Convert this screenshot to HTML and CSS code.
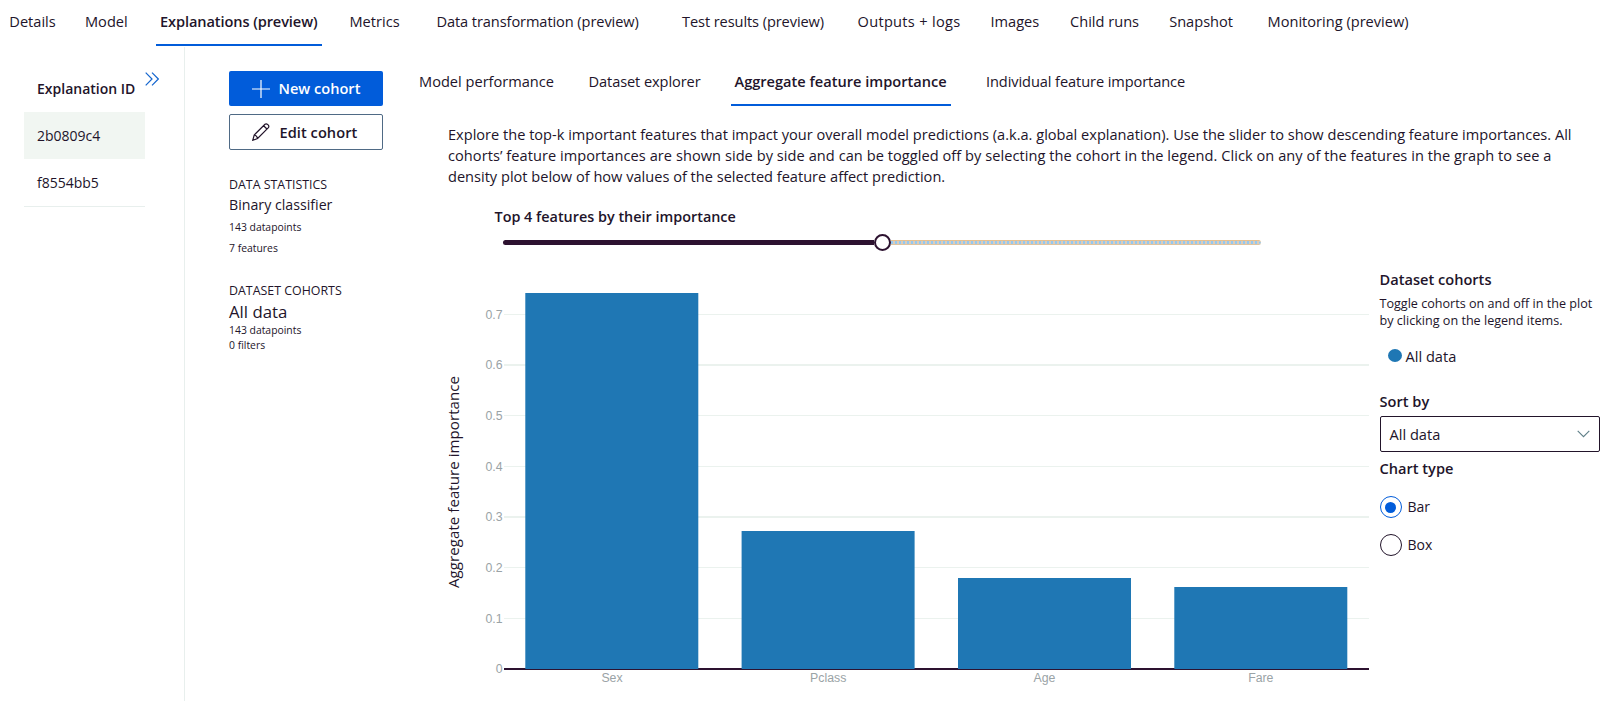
FILE: index.html
```html
<!DOCTYPE html>
<html lang="en">
<head>
<meta charset="utf-8">
<title>Explanations (preview)</title>
<link rel="stylesheet" href="styles.css">
</head>
<body>
<nav class="run-tabs">
  <a>Details</a><a>Model</a><a class="active">Explanations (preview)</a><a>Metrics</a><a class="snug">Data transformation (preview)</a><a class="snug">Test results (preview)</a><a class="wide">Outputs + logs</a><a>Images</a><a>Child runs</a><a>Snapshot</a><a>Monitoring (preview)</a>
</nav>
<div class="body">
  <aside class="explanations">
    <div class="explanations-head">
      <span>Explanation ID</span>
      <svg class="expand" width="14" height="14" viewBox="0 0 14 14"><path d="M.7.7 7 7 .7 13.3M7 .7 13.3 7 7 13.3"/></svg>
    </div>
    <div class="explanation selected">2b0809c4</div>
    <div class="explanation">f8554bb5</div>
  </aside>
  <section class="cohorts">
    <button class="btn primary">
      <svg width="18" height="18" viewBox="0 0 18 18"><path d="M9 0v18M0 9h18"/></svg>
      <span>New cohort</span>
    </button>
    <button class="btn outline">
      <svg width="18" height="18" viewBox="0 0 18 18"><path d="M.8 17.2 2.2 12 13 1.3c1.6-1.5 4.9 1.4 3.4 3.3L5.6 15.5ZM11.6 2.7l3.6 3.5M2.2 12c1.8.3 3 1.6 3.4 3.5"/></svg>
      <span>Edit cohort</span>
    </button>
    <h2 class="label">DATA STATISTICS</h2>
    <div class="model-kind">Binary classifier</div>
    <div class="stat first">143 datapoints</div>
    <div class="stat">7 features</div>
    <h2 class="label second">DATASET COHORTS</h2>
    <div class="cohort-name">All data</div>
    <div class="cohort-stat">143 datapoints</div>
    <div class="cohort-stat">0 filters</div>
  </section>
  <main class="main">
    <nav class="view-tabs">
      <a>Model performance</a><a class="snug">Dataset explorer</a><a class="active">Aggregate feature importance</a><a class="snug">Individual feature importance</a>
    </nav>
    <p class="intro">Explore the top-k important features that impact your overall model predictions (a.k.a. global explanation). Use the slider to show descending feature importances. All<br><span class="loose">cohorts’ feature importances are shown side by side and can be toggled off by selecting the cohort in the legend. Click on any of the features in the graph to see a</span><br>density plot below of how values of the selected feature affect prediction.</p>
    <div class="slider-title">Top 4 features by their importance</div>
    <div class="slider"><i class="filled"></i><i class="thumb"></i><i class="rest"></i></div>
    <div class="plot-row">
      <svg class="plot" width="931" height="441" viewBox="438 260 931 441">
        <g class="grid">
          <path d="M504 314.5h865M504 415.5h865M504 466.5h865M504 567.5h865M504 618.5h865"/>
          <path class="soft" d="M504 365h865M504 517h865"/>
        </g>
        <path class="axis" d="M504 669h865"/>
        <g class="bars">
          <rect x="525.3" y="293" width="173" height="376"/>
          <rect x="741.6" y="531" width="173" height="138"/>
          <rect x="958" y="578" width="173" height="91"/>
          <rect x="1174.3" y="587" width="173" height="82"/>
        </g>
        <g class="ticks end">
          <text x="502.5" y="318.8">0.7</text><text x="502.5" y="369.3">0.6</text><text x="502.5" y="420">0.5</text><text x="502.5" y="470.8">0.4</text><text x="502.5" y="521.3">0.3</text><text x="502.5" y="572">0.2</text><text x="502.5" y="622.8">0.1</text><text x="502.5" y="673.3">0</text>
        </g>
        <g class="ticks middle">
          <text x="612" y="682">Sex</text><text x="828.2" y="682">Pclass</text><text x="1044.5" y="682">Age</text><text x="1260.8" y="682">Fare</text>
        </g>
        <text class="axis-title" transform="translate(459.3 482) rotate(-90)" textLength="212">Aggregate feature importance</text>
      </svg>
      <div class="options">
        <h3>Dataset cohorts</h3>
        <p class="hint">Toggle cohorts on and off in the plot<br>by clicking on the legend items.</p>
        <div class="legend"><i></i>All data</div>
        <h3>Sort by</h3>
        <div class="select">All data<svg width="13" height="8" viewBox="0 0 13 8"><path d="M.7.8 6.5 6.6 12.3.8"/></svg></div>
        <h3 class="type">Chart type</h3>
        <div class="radio on"><i></i>Bar</div>
        <div class="radio"><i></i>Box</div>
      </div>
    </div>
  </main>
</div>
</body>
</html>
```
FILE: styles.css
```css
* { box-sizing: border-box; }
body {
  margin: 0;
  height: 701px;
  overflow: hidden;
  background: #fff;
  color: #22142a;
  font: 14.6px/20px "Open Sans", "Noto Sans", sans-serif;
}
h2, h3, p { margin: 0; font-size: inherit; }
h3 { font-weight: 600; }
svg { flex: none; fill: none; }

.run-tabs {
  display: grid;
  grid-template-columns: 75.7px 75px 189.5px 87px 245.5px 175.5px 133px 79.5px 99.2px 98.4px auto;
  height: 46px;
  padding: 11px 0 0 9.3px;
  white-space: nowrap;
}
.run-tabs a { height: 35px; justify-self: start; }
.run-tabs .wide { letter-spacing: .3px; }
.run-tabs .active, .view-tabs .active {
  font-weight: 600;
  border-bottom: 2px solid #015cda;
}
.run-tabs .active { width: 166px; margin-left: -4px; padding-left: 4px; letter-spacing: -.1px; }
.run-tabs .snug, .view-tabs .snug { letter-spacing: -.09px; }

.body { display: flex; height: 655px; }
.explanations {
  width: 185px;
  margin-top: 1px;
  padding-left: 24px;
  border-right: 1px solid #e8efed;
}
.explanations-head {
  display: flex;
  height: 65px;
  padding: 31.5px 0 0 13px;
  font-size: 14px;
  font-weight: 600;
}
.expand { margin: -6.5px 0 0 10px; stroke: #1566cf; stroke-width: 1.2; }
.explanation {
  width: 121px;
  height: 47px;
  padding-left: 13px;
  line-height: 47px;
  font-size: 14px;
}
.explanation.selected { background: #f1f6f2; }
.explanation:last-child { height: 48px; border-bottom: 1px solid #e8efed; }

.cohorts { width: 234px; padding: 25px 0 0 44px; }
.btn {
  display: flex;
  align-items: center;
  width: 154px;
  height: 35px;
  padding: 0 0 0 23px;
  border: 0;
  border-radius: 2px;
  font: 600 14.6px/20px "Open Sans", sans-serif;
  color: #22142a;
}
.btn svg { stroke: currentColor; stroke-width: 1.2; }
.primary { background: #015cda; color: #fff; }
.primary span { margin: -1px 0 0 8.5px; }
.outline {
  height: 36px;
  margin-top: 8px;
  padding-left: 22px;
  background: #fff;
  border: 1px solid #4f6a85;
}
.outline span { margin-left: 9.5px; letter-spacing: .05px; }
.label { margin-top: 26.5px; font-size: 12.4px; line-height: 16px; font-weight: 400; }
.model-kind { line-height: 23px; font-size: 14.2px; }
.stat { font-size: 10.4px; line-height: 21px; }
.stat.first { margin-top: 1px; }
.label.second { margin-top: 24.5px; }
.cohort-name { margin-top: .5px; font-size: 16.8px; line-height: 24px; }
.cohort-stat { font-size: 10.4px; line-height: 15px; }
.cohort-name + .cohort-stat { margin-top: -1px; }

.main { flex: 1; }
.view-tabs {
  display: grid;
  grid-template-columns: 169.5px 145.5px 252px auto;
  padding: 25px 0 0 0;
  height: 60px;
  white-space: nowrap;
}
.view-tabs a { height: 35px; justify-self: start; }
.view-tabs .active { width: 220px; margin-left: -3.5px; padding-left: 4px; }
.intro { margin: 18px 0 0 29px; line-height: 21px; white-space: nowrap; font-size: 14.58px; }
.loose { letter-spacing: .055px; }
.slider-title {
  margin: 20px 0 0 75.5px;
  font-weight: 600;
  font-size: 14.4px;
}
.slider {
  display: flex;
  align-items: center;
  width: 758px;
  height: 17px;
  margin: 7px 0 0 84px;
}
.filled { width: 371px; height: 5px; border-radius: 3px 0 0 3px; background: #2d1230; }
.thumb { width: 17px; height: 17px; border: 2px solid #2d1230; border-radius: 50%; background: #fff; }
.rest {
  flex: 1;
  height: 5px;
  border-radius: 0 3px 3px 0;
  border-top: 1px solid #e6c08f;
  border-bottom: 1px solid #dfc4a0;
  background: repeating-linear-gradient(90deg, #94c8f0 0 2px, #dccdbb 2px 4px) padding-box;
}

.plot-row { display: flex; margin: 9px 0 0 19px; }
.grid path { stroke: #ebf2ee; stroke-width: 1; }
.grid .soft { stroke-width: 2; }
.axis { stroke: #2d1230; stroke-width: 2; }
.bars { fill: #1f77b4; }
.ticks { font: 12.3px "Liberation Sans", Arial, sans-serif; fill: #9aa3a6; }
.end { text-anchor: end; }
.middle, .axis-title { text-anchor: middle; }
.axis-title { font-size: 15px; fill: #22142a; }

.options { width: 221px; margin-left: 10.5px; padding-top: 8.5px; }
.hint { margin-top: 6.5px; font-size: 12.6px; line-height: 17px; }
.legend { display: flex; align-items: center; margin: 17px 0 25px 8px; }
.legend i { width: 14px; height: 13px; margin: -1px 4px 0 0; border-radius: 50%; background: #1f77b4; }
.select {
  display: flex;
  align-items: center;
  justify-content: space-between;
  width: 220px;
  height: 36px;
  margin-top: 5px;
  padding: 0 9px;
  border: 1px solid #22142a;
  border-radius: 2px;
}
.select svg { stroke: #5f7f88; stroke-width: 1.1; margin-top: -1px; }
.type { margin: 6px 0 18px; }
.radio { display: flex; align-items: center; height: 22px; margin-bottom: 16px; font-size: 14px; }
.radio i {
  display: grid;
  place-items: center;
  width: 22px;
  height: 22px;
  margin-right: 6px;
  border: 1px solid #22142a;
  border-radius: 50%;
}
.radio.on i { border-color: #015cda; }
.radio.on i::before { content: ""; width: 11px; height: 11px; border-radius: 50%; background: #015cda; }
```
